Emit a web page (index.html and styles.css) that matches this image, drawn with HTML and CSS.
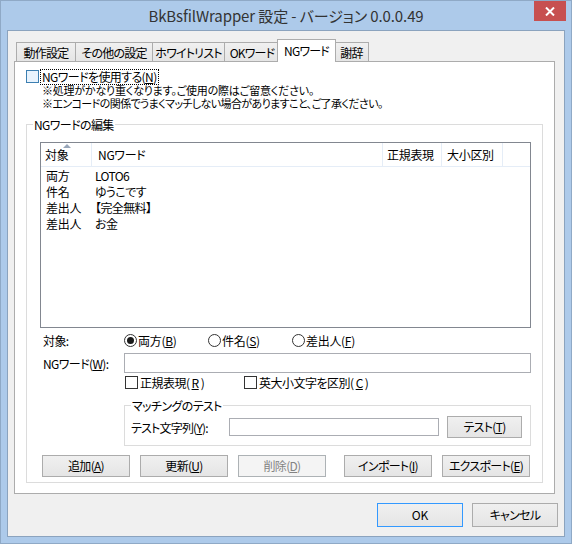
FILE: index.html
```html
<!DOCTYPE html>
<html lang="ja">
<head>
<meta charset="utf-8">
<title>BkBsfilWrapper 設定</title>
<link rel="stylesheet" href="styles.css">
</head>
<body>
<div class="window">
  <div class="titlebar">
    <span class="title-spacer"></span>
    <span class="title">BkBsfilWrapper 設定 - バージョン 0.0.0.49</span>
    <span class="title-actions">
      <span class="close-btn">
        <svg width="10" height="9" viewBox="0 0 10 9"><path d="M1 0.5 L9 8.5 M9 0.5 L1 8.5" stroke="#fff" stroke-width="2" fill="none"/></svg>
      </span>
    </span>
  </div>
  <div class="client">
    <div class="tabs">
      <div class="tab t-dousa">動作設定</div>
      <div class="tab t-sonota">その他の設定</div>
      <div class="tab t-white">ホワイトリスト</div>
      <div class="tab t-ok">OKワード</div>
      <div class="tab t-ng active">NGワード</div>
      <div class="tab t-thanks">謝辞</div>
    </div>
    <div class="panel">
      <div class="use-row">
        <span class="chk chk-hot"></span>
        <span class="focus-label">NGワードを使用する(<u>N</u>)</span>
      </div>
      <div class="notes">
        <div class="note n1">※処理がかなり重くなります。ご使用の際はご留意ください。</div>
        <div class="note n2">※エンコードの関係でうまくマッチしない場合がありますこと、ご了承ください。</div>
      </div>
      <fieldset class="group">
        <legend class="group-title">NGワードの編集</legend>
        <div class="listview">
          <div class="lv-head">
            <div class="lv-h c1">対象<span class="sort-arrow"></span></div>
            <div class="lv-h c2">NGワード</div>
            <div class="lv-h c3">正規表現</div>
            <div class="lv-h c4">大小区別</div>
          </div>
          <div class="lv-body">
            <div class="lv-row"><span class="lv-c c1">両方</span><span class="lv-c c2">LOTO6</span></div>
            <div class="lv-row"><span class="lv-c c1">件名</span><span class="lv-c c2">ゆうこです</span></div>
            <div class="lv-row"><span class="lv-c c1">差出人</span><span class="lv-c c2">【完全無料】</span></div>
            <div class="lv-row"><span class="lv-c c1">差出人</span><span class="lv-c c2">お金</span></div>
          </div>
        </div>
        <div class="form-row radio-row">
          <span class="form-label">対象:</span>
          <span class="radio-item"><span class="radio checked"></span>両方(<u>B</u>)</span>
          <span class="radio-item"><span class="radio"></span>件名(<u>S</u>)</span>
          <span class="radio-item"><span class="radio"></span>差出人(<u>F</u>)</span>
        </div>
        <div class="form-row word-row">
          <span class="form-label">NGワード(<u>W</u>):</span>
          <span class="textbox word-box"></span>
        </div>
        <div class="form-row check-row">
          <span class="check-item ci-regex"><span class="chk"></span>正規表現(<u>R</u>)</span>
          <span class="check-item"><span class="chk"></span>英大小文字を区別(<u>C</u>)</span>
        </div>
        <fieldset class="subgroup">
          <legend class="group-title sub-title">マッチングのテスト</legend>
          <div class="test-row">
            <span class="test-label">テスト文字列(<u>Y</u>):</span>
            <span class="textbox test-box"></span>
            <span class="btn test-btn">テスト(<u>T</u>)</span>
          </div>
        </fieldset>
        <div class="action-row">
          <span class="btn act">追加(<u>A</u>)</span>
          <span class="btn act">更新(<u>U</u>)</span>
          <span class="btn act disabled">削除(<u>D</u>)</span>
          <span class="btn act act-import">インポート(<u>I</u>)</span>
          <span class="btn act">エクスポート(<u>E</u>)</span>
        </div>
      </fieldset>
    </div>
    <div class="footer">
      <span class="btn dlg ok">OK</span>
      <span class="btn dlg">キャンセル</span>
    </div>
  </div>
</div>
</body>
</html>
```
FILE: styles.css
```css
* { box-sizing: border-box; }
html, body { margin: 0; padding: 0; background: #fff; }
body {
  font-family: "Noto Sans CJK JP", "Noto Sans", sans-serif;
  font-size: 12px;
  color: #000;
  font-feature-settings: "palt";
  letter-spacing: -0.3px;
  white-space: nowrap;
}
u { text-decoration: underline; text-decoration-thickness: 1px; text-underline-offset: 1px; }

.window {
  width: 572px;
  height: 544px;
  background: #adcaea;
  border: 1px solid #8fa9c6;
  padding: 0 6px 6px;
  display: flex;
  flex-direction: column;
}

.titlebar {
  height: 29px;
  display: grid;
  grid-template-columns: 1fr auto 1fr;
  align-items: center;
  flex: none;
}
.title {
  font-size: 15px;
  color: #333;
  line-height: 20px;
  padding-top: 1px;
  letter-spacing: -0.1px;
}
.title-actions { align-self: start; justify-self: end; margin-right: -1px; }
.close-btn {
  display: flex;
  align-items: center;
  justify-content: center;
  width: 32px;
  height: 20px;
  background: #c75050;
}

.client {
  flex: 1;
  background: #f0f0f0;
  border: 1px solid #8ba3be;
  display: flex;
  flex-direction: column;
  padding-top: 8px;
}

.tabs {
  display: flex;
  align-items: flex-end;
  height: 22px;
  padding-left: 8px;
  position: relative;
  z-index: 1;
}
.tab {
  height: 19px;
  border: 1px solid #acacac;
  border-bottom: none;
  background: linear-gradient(#f0f0f0, #e5e5e5);
  margin-right: -1px;
  display: flex;
  align-items: center;
  justify-content: center;
  line-height: 1;
  padding-top: 1px;
  letter-spacing: -0.8px;
  overflow: hidden;
}
.t-dousa { width: 60px; }
.t-sonota { width: 78px; }
.t-white { width: 73px; }
.t-ok { width: 56px; }
.t-ng { width: 59px; }
.t-thanks { width: 35px; }
.tab.active {
  height: 23px;
  background: #fff;
  margin-left: -2px;
  margin-right: -2px;
  margin-bottom: -1px;
  padding-bottom: 2px;
  position: relative;
}

.panel {
  height: 433px;
  flex: none;
  margin: 0 9px 0 6px;
  border: 1px solid #acacac;
  background: #fff;
  display: flex;
  flex-direction: column;
}

.use-row {
  display: flex;
  align-items: center;
  margin-top: 7px;
  padding-left: 11px;
  height: 15px;
}
.chk {
  display: inline-block;
  width: 13px;
  height: 13px;
  border: 1px solid #333;
  background: #fff;
  flex: none;
}
.chk-hot { border-color: #3c7fb1; background: #e8f3fd; }
.focus-label {
  margin-left: 2px;
  padding: 0 1px;
  outline: 1px dotted #000;
  outline-offset: 0;
  line-height: 14px;
  letter-spacing: -0.6px;
}

.notes {
  padding-left: 27px;
  line-height: 13px;
  font-size: 11px;
}
.n1 { letter-spacing: -0.2px; }
.n2 { letter-spacing: -0.6px; }

.group {
  margin: 8px 11px 0 11px;
  padding: 11px 0 5px 0;
  border: 1px solid #dcdcdc;
  min-width: 0;
  display: flex;
  flex-direction: column;
}
.group-title {
  padding: 0 1px;
  margin-left: 6px;
  line-height: 13px;
  letter-spacing: -0.6px;
}

.listview {
  margin-left: 13px;
  width: 491px;
  height: 186px;
  border: 1px solid #828790;
  background: #fff;
}
.lv-head {
  display: flex;
  height: 24px;
  border-bottom: 1px solid #e5edf7;
}
.lv-h {
  border-right: 1px solid #e5edf7;
  display: flex;
  align-items: center;
  padding-left: 5px;
  position: relative;
}
.lv-head .c1 { width: 51px; padding-left: 4px; }
.lv-head .c2 { width: 291px; padding-left: 6px; }
.lv-head .c3 { width: 59px; padding-left: 4px; }
.lv-head .c4 { width: 61px; padding-left: 5px; }
.sort-arrow {
  position: absolute;
  top: 1px;
  left: 22px;
  width: 0;
  height: 0;
  border-left: 4px solid transparent;
  border-right: 4px solid transparent;
  border-bottom: 4px solid #97a5b8;
}
.lv-row { display: flex; height: 16px; align-items: center; }
.lv-c.c1 { width: 51px; padding-left: 5px; }
.lv-c.c2 { padding-left: 3px; letter-spacing: -0.6px; }

.form-row { display: flex; align-items: center; }
.form-label { width: 97px; padding-left: 16px; flex: none; letter-spacing: -0.6px; }
.radio-row { margin-top: 4px; height: 16px; }
.radio-item { display: flex; align-items: center; width: 84px; }
.radio {
  width: 13px;
  height: 13px;
  border: 1px solid #333;
  border-radius: 50%;
  background: #fff;
  margin-right: 1px;
  display: flex;
  align-items: center;
  justify-content: center;
}
.radio.checked::after {
  content: "";
  width: 7px;
  height: 7px;
  border-radius: 50%;
  background: #1a1a1a;
}
.word-row { margin-top: 5px; height: 20px; }
.textbox {
  display: block;
  border: 1px solid #abadb3;
  background: #fff;
}
.word-box { width: 407px; height: 20px; }
.check-row { margin-top: 2px; height: 15px; padding-left: 98px; }
.check-item { display: flex; align-items: center; gap: 2px; letter-spacing: -0.5px; }
.ci-regex { width: 119px; }

.subgroup {
  margin: 9px 0 0 97px;
  width: 407px;
  padding: 4px 0 7px 0;
  border: 1px solid #dcdcdc;
  min-width: 0;
}
.sub-title { margin-left: 6px; }
.test-row { display: flex; align-items: center; height: 22px; padding-left: 6px; }
.test-label { width: 98px; letter-spacing: -0.8px; }
.test-box { width: 210px; height: 18px; }
.test-btn { width: 75px; height: 22px; margin-left: 8px; }

.btn {
  display: flex;
  align-items: center;
  justify-content: center;
  border: 1px solid #acacac;
  background: linear-gradient(#f0f0f0, #e5e5e5);
  line-height: 1;
  flex: none;
  letter-spacing: -0.7px;
}
.btn.disabled {
  background: #f4f4f4;
  border-color: #adb2b5;
  color: #838383;
}
.action-row {
  display: flex;
  gap: 10px;
  margin-top: 9px;
  padding-left: 15px;
}
.act { width: 88px; height: 22px; }
.act-import { margin-left: 8px; }

.footer {
  display: flex;
  justify-content: flex-end;
  gap: 9px;
  margin-top: 9px;
  padding-right: 6px;
}
.dlg { width: 86px; height: 24px; }
.ok { border-color: #3399ff; letter-spacing: 0; }
```
